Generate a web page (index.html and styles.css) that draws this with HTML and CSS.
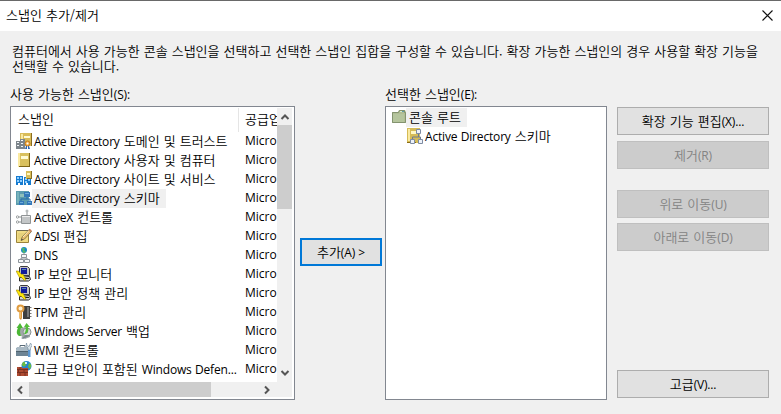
FILE: index.html
```html
<!DOCTYPE html>
<html lang="ko">
<head>
<meta charset="utf-8">
<title>스냅인 추가/제거</title>
<link rel="stylesheet" href="styles.css">
</head>
<body>
<svg class="defs" width="0" height="0">
  <defs>
    <symbol id="book" viewBox="0 0 16 16"><path d="M2 1h11v14H2z" fill="#d9c05e"/><path d="M2 1h2v14H2z" fill="#fae9a0"/><path d="M13 1h1v14H3v-1h10z" fill="#7d6416"/><path d="M5 4h7v3H5z" fill="#fffbd5"/></symbol>
    <symbol id="domain" viewBox="0 0 16 16"><path d="M4 0h12v13H4z" fill="#d9bc58"/><path d="M5 1h2v8H5z" fill="#fae9a0"/><path d="M8 3h6v2H8z" fill="#fffbd5"/><path d="M15 0h1v13h-1z" fill="#8b6d20"/><path d="M0 8h4V6h5v10H0z" fill="#7d858c"/><path d="M1 9h2v1H1zm0 3h2v1H1zm4-5h2v1H5zm0 3h2v1H5zm0 3h2v1H5z" fill="#f4f7fa"/><circle cx="11.5" cy="10.5" r="2.500" fill="#f5b04c" stroke="#c47a1c"/><circle cx="11.5" cy="10.5" r="1" fill="#fff"/><path d="M10 13h1v3H9zm2 0h1l1 3h-2z" fill="#2f65b0"/></symbol>
    <symbol id="site" viewBox="0 0 16 16"><path d="M0 5h7v9H0zm8 1h7v8H8z" fill="#167bd0"/><path d="M1 6h2v2H1zm3 0h2v2H4zM1 9h2v2H1zm3 0h2v2H4zm5-2h2v2H9zm3 1h2v2h-2zm-3 2h2v2H9z" fill="#8fceff"/><path d="M2 12h2v2H2zm8 0h2v2h-2z" fill="#fff"/><path d="M10 0h6v8h-6z" fill="#d8bd59"/><path d="M11 2h3v2h-3z" fill="#fff6bd"/><path d="M15 0h1v8h-5V7h4z" fill="#896f25"/></symbol>
    <symbol id="schema-blue" viewBox="0 0 16 16"><path d="M0 1h13v14H0z" fill="#5b9cae"/><path d="M1 2h2v11H1z" fill="#78b3bc"/><path d="M4 4h5v3H4z" fill="#8fc0bb"/><path d="M8 2h6v5H8zM3 11h5v4H3zm8 0h5v4h-5z" fill="#3478b9"/><path d="M9 3h4v1H9zm-5 9h3v1H4zm8 0h3v1h-3z" fill="#6eadd8"/><path d="M11 7v2H5v2m6-2h3v2" fill="none" stroke="#226aa9"/></symbol>
    <symbol id="schema" viewBox="0 0 16 16"><path d="M0 0h13v15H0z" fill="#d5bb56"/><path d="M1 1h2v12H1z" fill="#faeaa2"/><path d="M4 3h5v3H4z" fill="#fff8c4"/><path d="M0 14h9v1H0z" fill="#8b6c15"/><path d="M9.500 1.500h4v4h-4zM3.500 11.500h4v4h-4zm8 0h4v4h-4z" fill="#edf2fa" stroke="#7e8ca3"/><path d="M11.500 6v3h-6v2m6-2h2v2" fill="none" stroke="#6d7b91"/></symbol>
    <symbol id="activex" viewBox="0 0 16 16"><path d="M5.500 6.500h9v8h-9z" fill="#c3c6c7" stroke="#909496"/><path d="M6 7h8v1H6z" fill="#eee"/><path d="M11 7V3M2 8h3M2 13h3" fill="none" stroke="#8e9293"/><circle cx="11" cy="2" r="1.500" fill="#b7bbbc"/><circle cx="1.500" cy="8" r="1.200" fill="#fff" stroke="#9b9fa0"/><circle cx="1.500" cy="13" r="1.200" fill="#fff" stroke="#9b9fa0"/></symbol>
    <symbol id="edit" viewBox="0 0 16 16"><path d="M.5 2.500h12v12H.5z" fill="#f0dc84" stroke="#9b833b"/><path d="M1 2h11v1H1z" fill="#6f6a50"/><path d="M2 6h8M2 8h6M2 10h4" stroke="#dcc672"/><path d="m5 12.500 1.200-3.500 7-7.500 2.300 2-7 7.500z" fill="#e9bf72" stroke="#7b6a3e" stroke-width=".8"/><path d="m7 9 6-6.500" stroke="#fff0bc"/><path d="m12.500 2 1.300-1.300 2 1.800-1.300 1.500z" fill="#c97f61"/><path d="m5 12.500.7-2 1.300 1.300z" fill="#444"/></symbol>
    <symbol id="dns" viewBox="0 0 16 16"><circle cx="8" cy="3" r="3" fill="#178bc4"/><path d="M6 1h3L8 3l2 2-3 1z" fill="#55b865"/><path d="M8 6v5M5 12v-1h6v1" fill="none" stroke="#848a90"/><path d="M5.500 7.500h5v3h-5zM2.500 12.500h5v3h-5zm6 0h5v3h-5z" fill="#f6f8fa" stroke="#8d949b"/></symbol>
    <symbol id="ipsec" viewBox="0 0 16 16"><path d="M4.500.5h7l2 2v7h-10v-8z" fill="#c2c2c2" stroke="#3d3d3d"/><path d="M5 2h6v6H5z" fill="#111b9b"/><path d="M6 3h4v1H6z" fill="#58a"/><path d="m3.500 11.500 10-1 1 3-2 1.500h-9z" fill="#d6d6d6" stroke="#262626"/><path d="M9 12h4v1H9z" fill="#222"/><path d="M0 5h2.500l3 3.500L7 8l3 6-1.500.5L5 11l-1.500.5z" fill="#ffe80a" stroke="#857300" stroke-width=".5"/></symbol>
    <symbol id="tpm" viewBox="0 0 16 16"><path d="M7 2h7v13H7z" fill="#3f3f3f"/><path d="M14 3.500h1.500M14 6.500h1.500M14 9.500h1.500M14 12.500h1.500" stroke="#777"/><path d="M11 3h2v10h-2z" fill="#777"/><circle cx="4.500" cy="4.500" r="3" fill="#fff1d3" stroke="#df9b40" stroke-width="2"/><path d="M3 8h3v6l-1 2-2-2z" fill="#dc9439"/><path d="M4 8v6" stroke="#ffe19e"/></symbol>
    <symbol id="backup" viewBox="0 0 16 16"><path d="m3 6 6-2 5 4v6l-5 2-5-4z" fill="#a1a8a8"/><circle cx="11" cy="9" r="4" fill="#d7dcdc" stroke="#8a9494"/><circle cx="11" cy="9" r="1" fill="#72808b"/><path d="M3 13C0 11 .5 8 2 5H.5L4 0l3 5H5c-1.500 3-1 5 0 8z" fill="#4bb735"/><path d="M8 4 10.500 0 14 4h-2c1 3 0 5-2 7H8c2-3 2-4 1.500-7z" fill="#55bd3c"/><path d="m5 15 6-3 2 1-6 3z" fill="#7b888e"/></symbol>
    <symbol id="wmi" viewBox="0 0 16 16"><path d="M0 6h13v8H0z" fill="#6d8494"/><path d="M1 5h11l2 2v2H0V7z" fill="#a9b9c4"/><path d="M4 5V3.500h5V5" fill="none" stroke="#586a77"/><path d="M0 9h13v1H0z" fill="#4e626f"/><path d="m10.500 1 .5 2.500 2 1L14.500 1 16 3.500 14.500 6v2h-2.500V6L10 4z" fill="#dbe6ed" stroke="#71889a" stroke-width=".6"/><path d="M12 8h2.500v7H12z" fill="#5b97d0"/></symbol>
    <symbol id="firewall" viewBox="0 0 16 16"><circle cx="10.500" cy="5" r="5" fill="#2586d1"/><path d="M7 1c3-1 4 1 3 3L8 6 5.500 4zm6 1c3 1 2.500 4 1 6l-2-2z" fill="#68bb45"/><path d="M9 1h2v2H9z" fill="#d3f5fa"/><path d="M1 6h5v1h6v8H1z" fill="#ad4b32"/><path d="M1 8.500h11M1 11.500h11M4 6v2m4 0v3m-4 1v3m5-3v3M2.500 9v2" stroke="#7a3020"/></symbol>
    <symbol id="folder" viewBox="0 0 16 16"><path d="M1 3h6l1-2h6l1 2v11H1z" fill="#b0bd94"/><path d="M1.500 3.500h6l1-2h5v2h1v10h-13z" fill="none" stroke="#83936f"/><path d="M2 5h11v8H2z" fill="#b5c59d"/><path d="M9 2h4v1H9z" fill="#ddecc9"/><path d="M11 2h2v1h-2z" fill="#5c9dac"/></symbol>
    <symbol id="chevron" viewBox="0 0 10 6"><path d="m1.500 5 3.500-3.500L8.500 5" fill="none" stroke="#555" stroke-width="2"/></symbol>
  </defs>
</svg>
<div class="window">
  <header class="titlebar">
    <h1>스냅인 추가/제거</h1>
    <svg class="close" width="11" height="11" viewBox="0 0 11 11"><path d="m.5.500 10 10m0-10-10 10" stroke="#111" stroke-width="1.100"/></svg>
  </header>
  <main>
    <p class="intro">컴퓨터에서 사용 가능한 콘솔 스냅인을 선택하고 선택한 스냅인 집합을 구성할 수 있습니다. 확장 가능한 스냅인의 경우 사용할 확장 기능을<br>선택할 수 있습니다.</p>
    <div class="columns">
      <section class="available">
        <h2>사용 가능한 스냅인<span class="lat">(S):</span></h2>
        <div class="box grid">
          <div class="table">
            <div class="head"><span class="name">스냅인</span><span class="vendor">공급업체</span></div>
            <div class="row"><svg><use href="#domain"/></svg><span class="name"><i>Active Directory</i> 도메인 및 트러스트</span><span class="vendor">Micro</span></div>
            <div class="row"><svg><use href="#book"/></svg><span class="name"><i>Active Directory</i> 사용자 및 컴퓨터</span><span class="vendor">Micro</span></div>
            <div class="row"><svg><use href="#site"/></svg><span class="name"><i>Active Directory</i> 사이트 및 서비스</span><span class="vendor">Micro</span></div>
            <div class="row"><svg><use href="#schema-blue"/></svg><span class="name"><b><i>Active Directory</i> 스키마</b></span><span class="vendor">Micro</span></div>
            <div class="row"><svg><use href="#activex"/></svg><span class="name"><i>ActiveX</i> 컨트롤</span><span class="vendor">Micro</span></div>
            <div class="row"><svg><use href="#edit"/></svg><span class="name"><i>ADSI</i> 편집</span><span class="vendor">Micro</span></div>
            <div class="row"><svg><use href="#dns"/></svg><span class="name"><i>DNS</i></span><span class="vendor">Micro</span></div>
            <div class="row"><svg><use href="#ipsec"/></svg><span class="name"><i>IP</i> 보안 모니터</span><span class="vendor">Micro</span></div>
            <div class="row"><svg><use href="#ipsec"/></svg><span class="name"><i>IP</i> 보안 정책 관리</span><span class="vendor">Micro</span></div>
            <div class="row"><svg><use href="#tpm"/></svg><span class="name"><i>TPM</i> 관리</span><span class="vendor">Micro</span></div>
            <div class="row"><svg><use href="#backup"/></svg><span class="name"><i>Windows Server</i> 백업</span><span class="vendor">Micro</span></div>
            <div class="row"><svg><use href="#wmi"/></svg><span class="name"><i>WMI</i> 컨트롤</span><span class="vendor">Micro</span></div>
            <div class="row"><svg><use href="#firewall"/></svg><span class="name">고급 보안이 포함된 <i>Windows Defen...</i></span><span class="vendor">Micro</span></div>
          </div>
          <div class="vbar"><svg class="chev"><use href="#chevron"/></svg><span class="thumb"></span><svg class="chev down"><use href="#chevron"/></svg></div>
          <div class="hbar"><svg class="chev left"><use href="#chevron"/></svg><span class="thumb"></span><svg class="chev right"><use href="#chevron"/></svg></div>
          <div class="corner"></div>
        </div>
      </section>
      <button class="add">추가<span class="lat">(A) &gt;</span></button>
      <section class="selected">
        <h2>선택한 스냅인<span class="lat">(E):</span></h2>
        <div class="box tree">
          <div class="row"><svg><use href="#folder"/></svg><b class="root">콘솔 루트</b></div>
          <div class="row child"><svg><use href="#schema"/></svg><span class="name"><i>Active Directory</i> 스키마</span></div>
        </div>
      </section>
      <div class="actions">
        <button>확장 기능 편집<span class="lat">(X)...</span></button>
        <button class="remove" disabled>제거<span class="lat">(R)</span></button>
        <button class="up" disabled>위로 이동<span class="lat">(U)</span></button>
        <button class="downward" disabled>아래로 이동<span class="lat">(D)</span></button>
        <button class="advanced">고급<span class="lat">(V)...</span></button>
      </div>
    </div>
  </main>
</div>
</body>
</html>
```
FILE: styles.css
```css
* { box-sizing: border-box; }
body { margin: 0; font: 350 13px/19px "Noto Sans CJK KR DemiLight", "Noto Sans CJK KR", sans-serif; color: #000; word-spacing: .4px; }
h1, h2, p { margin: 0; font: inherit; }
i, .lat, .vendor { font-family: "Open Sans", "Noto Sans CJK KR", sans-serif; font-weight: 400; font-size: 12px; font-style: normal; letter-spacing: -.17px; line-height: 1; }
b { font-weight: inherit; }
.defs { position: absolute; }
.window { width: 781px; height: 414px; background: #f0f0f0; border-top: 1px solid #696969; overflow: hidden; }
.titlebar { height: 30px; background: #fff; display: flex; align-items: center; justify-content: space-between; padding: 0 8px 2px 6px; }
h1 { line-height: 17px; padding-bottom: 2px; }
.close { display: block; }
.intro { padding: 12px 0 0 12px; line-height: 15px; white-space: nowrap; height: 54px; }
.columns { display: flex; padding-left: 10px; height: 315px; }
section { display: flex; flex-direction: column; }
h2 { height: 21px; line-height: 17px; white-space: nowrap; }
.available { width: 285px; }
.selected { width: 222px; }
.box { height: 294px; border: 1px solid #828790; background: #fff; padding: 1px; }
.grid { display: grid; grid-template-columns: 265px 15px; grid-template-rows: 274px 15px; padding-right: 2px; }
.table { overflow: hidden; }
.row, .head { display: flex; height: 19px; line-height: 17px; white-space: nowrap; }
.row svg { width: 16px; height: 16px; margin: 1px 2px 0 4px; flex: none; }
.name { width: 211px; flex: none; }
.row .vendor { line-height: 18px; letter-spacing: 0; }
.head { height: 24px; line-height: 21px; }
.head .name { width: 227px; padding-left: 6px; border-right: 1px solid #e5e5e5; }
.head .vendor { padding-left: 6px; font: inherit; letter-spacing: 0; }
.name b { display: inline-block; height: 19px; background: #f0f0f0; margin-left: -2px; padding: 0 6px 0 2px; }
.vbar, .hbar { background: #f0f0f0; display: flex; align-items: center; justify-content: space-between; }
.vbar { flex-direction: column; padding: 6px 0; }
.chev { width: 10px; height: 6px; flex: none; }
.down { transform: rotate(180deg); }
.left { transform: rotate(-90deg); }
.right { transform: rotate(90deg); }
.thumb { background: #cdcdcd; }
.vbar .thumb { width: 15px; height: 84px; margin: 5px 0 auto; }
.hbar { padding: 0 5px 0 3px; }
.hbar .thumb { height: 15px; width: 182px; margin: 0 auto 0 4px; }
.corner { background: #f0f0f0; }
button { height: 28px; padding: 0; border: 1px solid #adadad; background: #e1e1e1; color: #000; font: inherit; line-height: 23px; padding-bottom: 2px; word-spacing: inherit; white-space: nowrap; }
button:disabled { background: #ccc; border-color: #bfbfbf; color: #838383; }
.add { width: 82px; margin: 153px 3px 0 5px; border: 2px solid #0078d7; line-height: 21px; }
.root { background: #f0f0f0; margin-left: 0; padding: 0 6px 0 2px; }
.tree .row svg { margin: 1px 0 0 4px; }
.tree .row .root { margin-left: -1px; padding-left: 3px; }
.tree .child { padding-left: 16px; }
.tree .child .name { padding-left: 2px; width: auto; }
.actions { display: flex; flex-direction: column; width: 152px; margin-left: 10px; padding-top: 22px; }
.remove { margin-top: 6px; }
.up { margin-top: 21px; }
.downward { margin-top: 5px; }
.advanced { margin-top: 119px; }
```
